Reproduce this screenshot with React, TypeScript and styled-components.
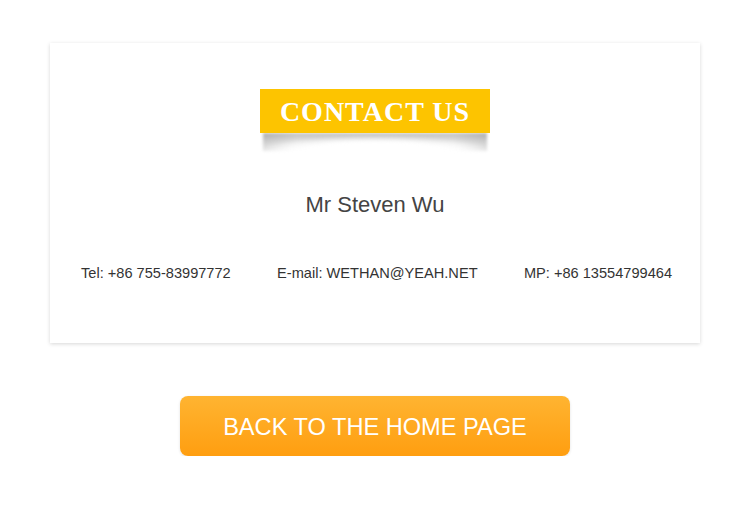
import React from "react";
import styled, { createGlobalStyle } from "styled-components";

const Global = createGlobalStyle`
  html, body { margin: 0; padding: 0; background: #ffffff; }
  body { font-family: "Liberation Sans", Arial, sans-serif; }
`;

const Page = styled.div`
  display: flex;
  flex-direction: column;
  align-items: center;
  padding-top: 43px;
`;

const Card = styled.section`
  box-sizing: border-box;
  width: 650px;
  height: 300px;
  background: #fff;
  box-shadow: 0 1px 4px rgba(0, 0, 0, 0.16);
  display: flex;
  flex-direction: column;
  align-items: center;
  padding: 46px 0 0;
`;

const BadgeWrap = styled.div`
  position: relative;
  z-index: 0;
`;

const Badge = styled.h1`
  position: relative;
  margin: 0;
  width: 230px;
  height: 44px;
  background: #fdc400;
  color: #fff;
  font-family: "Liberation Serif", "Times New Roman", serif;
  font-weight: bold;
  font-size: 28px;
  letter-spacing: 1px;
  line-height: 45px;
  text-align: center;
  &::after {
    content: "";
    position: absolute;
    left: 3px;
    right: 3px;
    top: 44px;
    height: 18px;
    background:
      radial-gradient(ellipse 62% 100% at 50% 100%, #fff 50%, rgba(255,255,255,0) 85%),
      linear-gradient(to right, rgba(0,0,0,0.1), rgba(0,0,0,0) 15%, rgba(0,0,0,0) 85%, rgba(0,0,0,0.1)),
      linear-gradient(to bottom, rgba(0,0,0,0.25), rgba(0,0,0,0.08) 60%, rgba(0,0,0,0) 100%);
    filter: blur(1.5px);
    z-index: -1;
  }
`;

const Name = styled.h2`
  margin: 57px 0 0;
  font-weight: normal;
  font-size: 22px;
  line-height: 30px;
  color: #444;
`;

const InfoRow = styled.div`
  box-sizing: border-box;
  width: 100%;
  margin-top: 43px;
  padding: 0 28px 0 31px;
  display: flex;
  justify-content: space-between;
`;

const Info = styled.span`
  font-size: 14.6px;
  line-height: 20px;
  color: #333;
`;

const HomeButton = styled.a`
  margin-top: 53px;
  width: 390px;
  height: 60px;
  border-radius: 8px;
  background: linear-gradient(to bottom, #ffb431, #ff9e10);
  box-shadow: 0 1px 3px rgba(0, 0, 0, 0.12);
  color: #fff;
  font-size: 23.6px;
  line-height: 62px;
  text-align: center;
  text-decoration: none;
  cursor: pointer;
`;

export default function App() {
  return (
    <>
      <Global />
      <Page>
        <Card>
          <BadgeWrap>
            <Badge>CONTACT US</Badge>
          </BadgeWrap>
          <Name>Mr Steven Wu</Name>
          <InfoRow>
            <Info>Tel: +86 755-83997772</Info>
            <Info>E-mail: WETHAN@YEAH.NET</Info>
            <Info>MP: +86 13554799464</Info>
          </InfoRow>
        </Card>
        <HomeButton>BACK TO THE HOME PAGE</HomeButton>
      </Page>
    </>
  );
}
